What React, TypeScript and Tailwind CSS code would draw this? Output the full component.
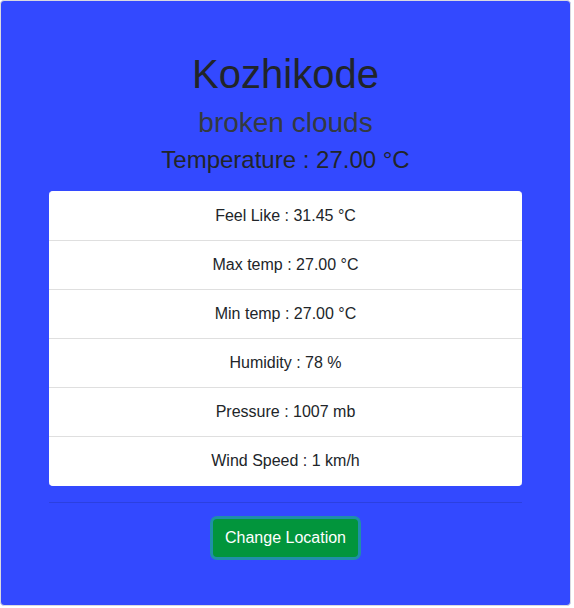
import React from 'react';

const details = [
  { label: 'Feel Like', value: '31.45 °C' },
  { label: 'Max temp', value: '27.00 °C' },
  { label: 'Min temp', value: '27.00 °C' },
  { label: 'Humidity', value: '78 %' },
  { label: 'Pressure', value: '1007 mb' },
  { label: 'Wind Speed', value: '1 km/h' },
];

export default function App() {
  return (
    <div className="bg-white w-[574px] h-[608px]" style={{ fontFamily: '"Liberation Sans", Arial, sans-serif' }}>
      <div className="w-[571px] h-[606px] border border-[#d9d9e0] rounded bg-[#3349ff] px-12 pt-[49px] text-center">
        <h1 className="text-[40px] leading-[48px] text-[#212529]">Kozhikode</h1>
        <h2 className="text-[28px] leading-[34px] text-[#343a40] mt-[8px]">broken clouds</h2>
        <h3 className="text-[24px] leading-[29px] text-[#212529] mt-[5px]">Temperature : 27.00 °C</h3>

        {/* Details list */}
        <ul className="mt-[17px] bg-white rounded border-y border-white text-[16px] text-[#212529]">
          {details.map((d, i) => (
            <li
              key={d.label}
              className={`py-3 leading-6 ${i < details.length - 1 ? 'border-b border-[#dfdfdf]' : ''}`}
            >
              {d.label} : {d.value}
            </li>
          ))}
        </ul>

        <hr className="mt-4 border-0 border-t border-[rgba(0,0,0,0.12)]" />

        <button className="mt-4 px-3 py-[7px] leading-6 text-[16px] text-white bg-[#02953c] rounded ring-[3px] ring-[#1f8fa8]">
          Change Location
        </button>
      </div>
    </div>
  );
}
